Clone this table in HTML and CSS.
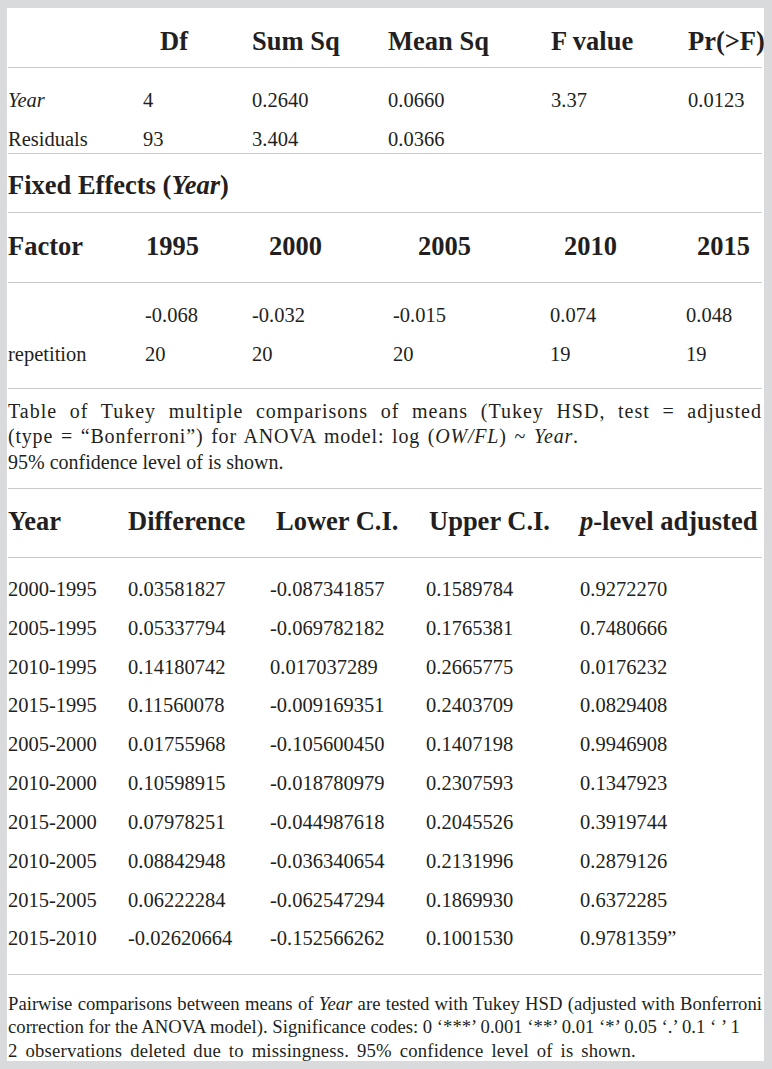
FILE: index.html
```html
<!DOCTYPE html>
<html lang="en">
<head>
<meta charset="utf-8">
<title>ANOVA and Tukey HSD</title>
<link rel="stylesheet" href="styles.css">
</head>
<body>
<div class="panel">
  <div class="row t1 head h1">
    <div></div><div>Df</div><div>Sum Sq</div><div>Mean Sq</div><div>F value</div><div>Pr(&gt;F)</div>
  </div>
  <div class="body b1">
    <div class="row t1 data">
      <div><i>Year</i></div><div>4</div><div>0.2640</div><div>0.0660</div><div>3.37</div><div>0.0123</div>
    </div>
    <div class="row t1 data">
      <div>Residuals</div><div>93</div><div>3.404</div><div>0.0366</div><div></div><div></div>
    </div>
  </div>
  <div class="section-title">Fixed Effects (<i>Year</i>)</div>
  <div class="row t2 head h2">
    <div>Factor</div><div>1995</div><div>2000</div><div>2005</div><div>2010</div><div>2015</div>
  </div>
  <div class="body b2">
    <div class="row t2 data">
      <div></div><div>-0.068</div><div>-0.032</div><div>-0.015</div><div>0.074</div><div>0.048</div>
    </div>
    <div class="row t2 data">
      <div>repetition</div><div>20</div><div>20</div><div>20</div><div>19</div><div>19</div>
    </div>
  </div>
  <p class="caption"><span class="spread">Table of Tukey multiple comparisons of means (Tukey HSD, test = adjusted</span><span class="wide">(type = “Bonferroni”) for ANOVA model: log (<i>OW/FL</i>) ~ <i>Year</i>.</span>95% confidence level of is shown.</p>
  <div class="row t3 head h3">
    <div>Year</div><div>Difference</div><div>Lower C.I.</div><div>Upper C.I.</div><div><i>p</i>-level adjusted</div>
  </div>
  <div class="body b3">
    <div class="row t3 data"><div>2000-1995</div><div>0.03581827</div><div>-0.087341857</div><div>0.1589784</div><div>0.9272270</div></div>
    <div class="row t3 data"><div>2005-1995</div><div>0.05337794</div><div>-0.069782182</div><div>0.1765381</div><div>0.7480666</div></div>
    <div class="row t3 data"><div>2010-1995</div><div>0.14180742</div><div>0.017037289</div><div>0.2665775</div><div>0.0176232</div></div>
    <div class="row t3 data"><div>2015-1995</div><div>0.11560078</div><div>-0.009169351</div><div>0.2403709</div><div>0.0829408</div></div>
    <div class="row t3 data"><div>2005-2000</div><div>0.01755968</div><div>-0.105600450</div><div>0.1407198</div><div>0.9946908</div></div>
    <div class="row t3 data"><div>2010-2000</div><div>0.10598915</div><div>-0.018780979</div><div>0.2307593</div><div>0.1347923</div></div>
    <div class="row t3 data"><div>2015-2000</div><div>0.07978251</div><div>-0.044987618</div><div>0.2045526</div><div>0.3919744</div></div>
    <div class="row t3 data"><div>2010-2005</div><div>0.08842948</div><div>-0.036340654</div><div>0.2131996</div><div>0.2879126</div></div>
    <div class="row t3 data"><div>2015-2005</div><div>0.06222284</div><div>-0.062547294</div><div>0.1869930</div><div>0.6372285</div></div>
    <div class="row t3 data"><div>2015-2010</div><div>-0.02620664</div><div>-0.152566262</div><div>0.1001530</div><div>0.9781359”</div></div>
  </div>
  <p class="footnote"><span class="fill">Pairwise comparisons between means of <i>Year</i> are tested with Tukey HSD (adjusted with Bonferroni</span><span class="line">correction for the ANOVA model). Significance codes: 0 ‘***’ 0.001 ‘**’ 0.01 ‘*’ 0.05 ‘.’ 0.1 ‘ ’ 1</span><span class="line loose">2 observations deleted due to missingness. 95% confidence level of is shown.</span></p>
</div>
</body>
</html>
```

FILE: styles.css
```css
* { box-sizing: border-box; }
html, body { margin: 0; }
body {
  background: #d9dadc;
  font-family: "Liberation Serif", "Times New Roman", serif;
  color: #231f20;
}
.panel {
  margin: 8px 8px 8px 7px;
  width: 757px;
  height: 1053px;
  background: #ffffff;
  padding: 0 2px 0 1px;
  overflow: hidden;
}
.row {
  display: grid;
  align-items: baseline;
  white-space: nowrap;
}
.t1 { grid-template-columns: 135px 109px 136px 163px 137px 1fr; }
.t2 { grid-template-columns: 137px 107px 141px 157px 136px 1fr; }
.t3 { grid-template-columns: 120px 142px 156px 154px 1fr; }

.head {
  font-weight: bold;
  font-size: 26.5px;
  line-height: 30px;
  border-bottom: 1px solid #c9cacc;
}
.h1 { padding: 18px 0 11px; }
.h1 > div:nth-child(2) { padding-left: 17px; }
.h2 { padding: 18px 0 21px; }
.h2 > div:nth-child(2) { padding-left: 1px; }
.h2 > div:nth-child(3) { padding-left: 17px; }
.h2 > div:nth-child(4) { padding-left: 25px; }
.h2 > div:nth-child(5) { padding-left: 14px; }
.h2 > div:nth-child(6) { padding-left: 11px; }
.h3 { padding: 16.5px 0 21.5px; }
.h3 > div:nth-child(3) { padding-left: 6px; }
.h3 > div:nth-child(4) { padding-left: 3px; }

.body {
  display: flex;
  flex-direction: column;
  border-bottom: 1px solid #c9cacc;
}
.b1 { padding: 20px 0 2.5px; gap: 14.5px; }
.b2 { padding: 20px 0 22.5px; gap: 14.5px; }
.b3 { padding: 19px 0 23.5px; gap: 14.83px; }
.data {
  font-size: 20.5px;
  line-height: 24px;
}

.section-title {
  font-weight: bold;
  font-size: 26.5px;
  line-height: 30px;
  padding: 16px 0 12px;
  border-bottom: 1px solid #c9cacc;
}

.caption {
  margin: 0;
  font-size: 20px;
  line-height: 25.5px;
  padding: 9.5px 0 13px;
  border-bottom: 1px solid #c9cacc;
}
.spread {
  display: block;
  text-align: justify;
  text-align-last: justify;
  letter-spacing: 1px;
}
.wide {
  display: block;
  letter-spacing: 0.8px;
  word-spacing: 2px;
}

.footnote {
  margin: 0;
  font-size: 18.7px;
  line-height: 23.5px;
  padding: 17px 0 0;
}
.fill {
  display: block;
  text-align: justify;
  text-align-last: justify;
}
.line {
  display: block;
  white-space: nowrap;
}
.loose {
  word-spacing: 3px;
  letter-spacing: 0.2px;
}
```
